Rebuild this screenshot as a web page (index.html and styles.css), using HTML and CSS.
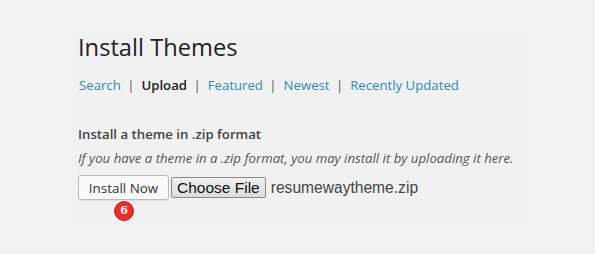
FILE: index.html
```html
<!DOCTYPE html>
<html lang="en">

<head>
    <meta charset="UTF-8" />
    <title>Install Themes</title>
    <link rel="stylesheet" href="styles.css">
</head>

<body>
    <div class="wrap">
        <h1>Install Themes</h1>
        <ul class="subsubsub">
            <li><a href="#">Search</a> |</li>
            <li><a href="#" class="current">Upload</a> |</li>
            <li><a href="#">Featured</a> |</li>
            <li><a href="#">Newest</a> |</li>
            <li><a href="#">Recently Updated</a></li>
        </ul>
        <h4>Install a theme in .zip format</h4>
        <p class="install-help">If you have a theme in a .zip format, you may install it by uploading it here.</p>
        <form class="upload-form">
            <div class="submit-wrap">
                <button type="button" class="button">Install Now</button>
                <span class="step">6</span>
            </div>
            <button type="button" class="choose-file">Choose File</button>
            <span class="file-name">resumewaytheme.zip</span>
        </form>
    </div>
</body>

</html>
```

FILE: styles.css
```css
body {
    margin: 0;
    padding: 33px 0 0 0;
    background-color: #f2f2f2;
    font-family: "Open Sans", sans-serif;
    font-size: 13.2px;
    color: #444;
}

.wrap {
    width: 451px;
    height: 194px;
    margin-left: 68px;
    padding: 0 0 0 10px;
    background-color: #f1f1f1;
}

h1 {
    font-size: 23.7px;
    font-weight: 400;
    line-height: 30px;
    margin: -1px 0 0 0;
    color: #222;
}

.subsubsub {
    list-style: none;
    margin: 14px 0 0 1px;
    padding: 0;
    display: flex;
    gap: 7px;
    line-height: 18px;
    color: #555;
}

.subsubsub a {
    color: #2a8ab9;
    text-decoration: none;
    margin-right: 3px;
}

.subsubsub a.current {
    color: #222;
    font-weight: 600;
}

h4 {
    font-size: 13.2px;
    font-weight: 600;
    line-height: 18px;
    margin: 31px 0 0 0;
    color: #444;
}

.install-help {
    font-style: italic;
    margin: 6px 0 0 0;
    line-height: 18px;
    color: #555;
}

.upload-form {
    display: flex;
    align-items: center;
    margin-top: 8px;
}

.submit-wrap {
    position: relative;
}

.button {
    font-family: "Open Sans", sans-serif;
    font-size: 13.4px;
    color: #333;
    width: 91px;
    height: 25px;
    padding: 0;
    background: #fafafa;
    border: 1px solid #bbb;
    border-radius: 3px;
    box-shadow: 0 1px 0 rgba(0, 0, 0, 0.08);
}

.step {
    position: absolute;
    left: 36px;
    top: 26px;
    width: 20px;
    height: 20px;
    border-radius: 50%;
    background: #ee2a2a;
    border: 1px solid #c81818;
    box-shadow: 0 0 0 1px rgba(255, 255, 255, 0.7);
    box-sizing: border-box;
    color: #fff;
    font-family: "DejaVu Serif", serif;
    font-weight: 700;
    font-size: 11px;
    line-height: 18px;
    text-align: center;
}

.choose-file {
    font-family: "Liberation Sans", Arial, sans-serif;
    font-size: 15.5px;
    color: #111;
    height: 21px;
    margin-left: 2px;
    padding: 0 5px;
    background: linear-gradient(#f0f0f0, #dcdcdc);
    border: 1px solid #8a8a8a;
    border-radius: 2px;
}

.file-name {
    font-family: "Liberation Sans", Arial, sans-serif;
    font-size: 15.6px;
    color: #444;
    margin-left: 5px;
}
```
